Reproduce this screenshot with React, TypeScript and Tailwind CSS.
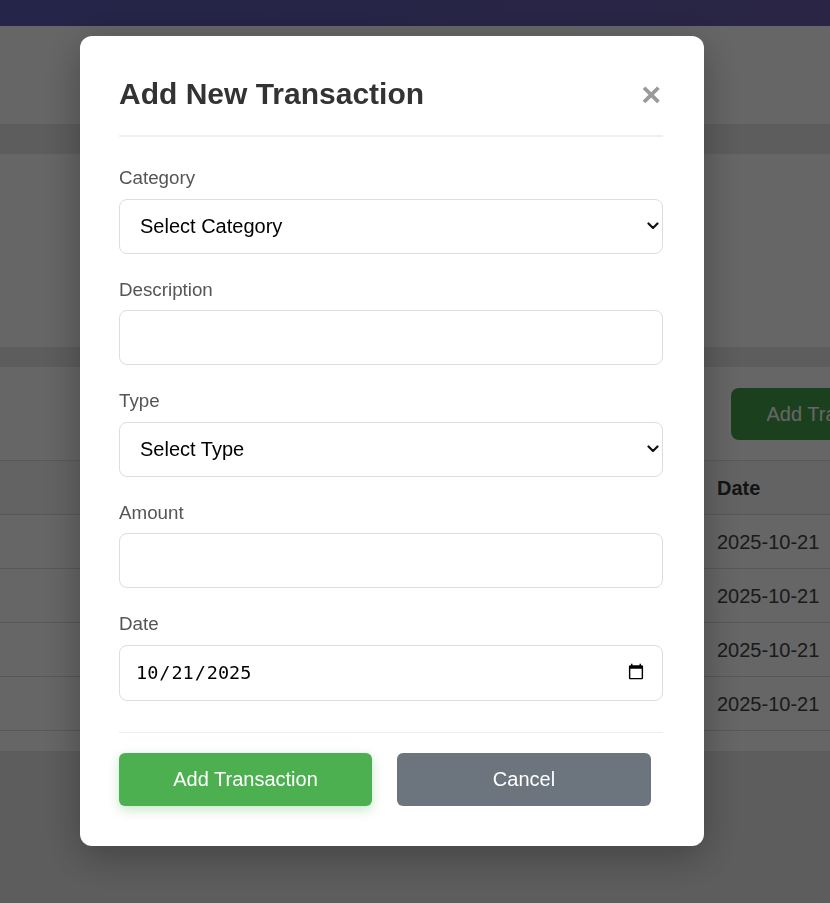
import React, { useState } from 'react'

// Dimmed page underneath the modal
const rows = ['2025-10-21', '2025-10-21', '2025-10-21', '2025-10-21']

const Chevron = () => (
  <svg
    className="pointer-events-none absolute right-[4px] top-1/2 -translate-y-1/2"
    width="12"
    height="8"
    viewBox="0 0 12 8"
    fill="none"
  >
    <path d="M1.5 1.5 L6 6 L10.5 1.5" stroke="#111" strokeWidth="2.2" strokeLinecap="round" strokeLinejoin="round" />
  </svg>
)

const App: React.FC = () => {
  const [category, setCategory] = useState<string>('')
  const [description, setDescription] = useState<string>('')
  const [type, setType] = useState<string>('')
  const [amount, setAmount] = useState<string>('')
  const [date, setDate] = useState<string>('2025-10-21')

  const fieldClass =
    'block w-full h-[55px] px-[15px] border border-[#ddd] rounded-[8px] text-[20px] text-black bg-white outline-none'
  const labelClass = 'block text-[18.75px] leading-[21.5px] text-[#555] mb-[10px]'

  return (
    <div className="relative h-[903px] w-[830px] overflow-hidden bg-[#e8e8e8] font-['Liberation_Sans',Arial,sans-serif]">
      {/* background page */}
      <div className="h-[26px] bg-gradient-to-r from-[#5a5cb6] to-[#6a5cab]" />
      <div className="h-[98px] bg-white" />
      <div className="h-[30px]" />
      <div className="h-[193px] bg-white" />
      <div className="h-[20px]" />
      <div className="w-[966px] bg-white pb-[20px]">
        <div className="flex justify-end pr-[20px] pt-[21px] pb-[20px]">
          <button className="h-[52px] px-[35px] rounded-[8px] bg-[#45a049] text-white text-[20px] whitespace-nowrap">
            Add Transaction
          </button>
        </div>
        <div className="border-b border-[#ddd]">
          <div className="grid grid-cols-[702px_1fr] h-[54px] items-center border-t border-[#ddd] bg-[#f8f8f8]">
            <div />
            <div className="px-[15px] text-[20px] font-bold text-[#333]">Date</div>
          </div>
          {rows.map((d, i) => (
            <div key={i} className="grid grid-cols-[702px_1fr] h-[54px] items-center border-t border-[#ddd]">
              <div />
              <div className="px-[15px] text-[20px] text-[#444]">{d}</div>
            </div>
          ))}
        </div>
      </div>

      {/* overlay + modal */}
      <div className="fixed inset-0 bg-black/60 flex items-start pl-[80px] pt-[36px]">
        <div className="w-[624px] bg-white rounded-[12px] py-[40px] pl-[39px] pr-[41px] shadow-[0_10px_40px_rgba(0,0,0,0.3)]">
          <div className="flex items-center justify-between pb-[23px] border-b-2 border-[#f0f0f0]">
            <h2 className="text-[30px] leading-[36px] font-bold text-[#333]">Add New Transaction</h2>
            <button className="text-[34px] leading-[36px] font-bold text-[#999] pr-[2px]">×</button>
          </div>

          <div className="mt-[30px]">
            <div className="mb-[25px]">
              <label className={labelClass}>Category</label>
              <div className="relative">
                <select
                  value={category}
                  onChange={(e) => setCategory(e.target.value)}
                  className={fieldClass + ' appearance-none pl-[20px]'}
                >
                  <option value="">Select Category</option>
                  <option value="food">Food</option>
                  <option value="salary">Salary</option>
                </select>
                <Chevron />
              </div>
            </div>

            <div className="mb-[25px]">
              <label className={labelClass}>Description</label>
              <input
                type="text"
                value={description}
                onChange={(e) => setDescription(e.target.value)}
                className={fieldClass}
              />
            </div>

            <div className="mb-[25px]">
              <label className={labelClass}>Type</label>
              <div className="relative">
                <select
                  value={type}
                  onChange={(e) => setType(e.target.value)}
                  className={fieldClass + ' appearance-none pl-[20px]'}
                >
                  <option value="">Select Type</option>
                  <option value="income">Income</option>
                  <option value="expense">Expense</option>
                </select>
                <Chevron />
              </div>
            </div>

            <div className="mb-[25px]">
              <label className={labelClass}>Amount</label>
              <input
                type="number"
                value={amount}
                onChange={(e) => setAmount(e.target.value)}
                className={fieldClass}
              />
            </div>

            <div>
              <label className={labelClass}>Date</label>
              <input
                type="date"
                value={date}
                onChange={(e) => setDate(e.target.value)}
                className="block w-full h-[56px] px-[15px] border border-[#ddd] rounded-[8px] text-[18.5px] text-black bg-white outline-none font-['DejaVu_Sans_Mono',monospace]"
              />
            </div>
          </div>

          <div className="mt-[31px] border-t border-[#eee] pt-[20px] flex gap-[25px]">
            <button className="w-[253px] h-[53px] rounded-[6px] bg-[#4caf50] text-white text-[20px] shadow-[0_4px_12px_rgba(76,175,80,0.3)]">
              Add Transaction
            </button>
            <button className="w-[254px] h-[53px] rounded-[6px] bg-[#6c757d] text-white text-[20px]">
              Cancel
            </button>
          </div>
        </div>
      </div>
    </div>
  )
}

export default App
